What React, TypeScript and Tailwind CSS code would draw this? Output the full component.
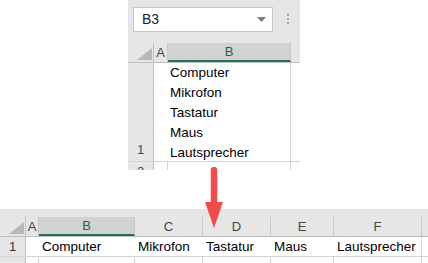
import React from 'react'

const sans = "font-['Liberation_Sans',Arial,sans-serif]"

function Corner({ w }: { w: string }) {
  return (
    <div className={`${w} h-full relative border-r border-[#bfbfbf] shrink-0`}>
      <svg className="absolute right-[1px] bottom-[2px]" width="15" height="12" viewBox="0 0 15 12">
        <polygon points="15,0 15,12 0,12" fill="#b8b8b8" />
      </svg>
    </div>
  )
}

function Head({ w, label, selected }: { w: string; label: string; selected?: boolean }) {
  return (
    <div
      className={`${w} h-full shrink-0 flex items-center justify-center border-r border-[#c9c9c9] text-[13px] ${
        selected ? 'bg-[#d2d2d2] text-[#1d6b3e] border-b-2 border-b-[#217346]' : 'text-[#444]'
      }`}
    >
      {label}
    </div>
  )
}

const words = ['Computer', 'Mikrofon', 'Tastatur', 'Maus', 'Lautsprecher']

function TopSheet() {
  return (
    <div className={`ml-[128px] w-[172px] h-[170px] bg-[#e6e6e6] flex flex-col overflow-hidden ${sans}`}>
      {/* formula bar */}
      <div className="h-[43px] flex items-start pt-[7px] pl-[5px] shrink-0">
        <div className="w-[140px] h-[25px] bg-white border border-[#c6c6c6] flex items-center justify-between pl-[8px] pr-[6px] text-[14px] text-[#222]">
          B3
          <svg width="9" height="5" viewBox="0 0 9 5">
            <polygon points="0,0 9,0 4.5,5" fill="#7a7a7a" />
          </svg>
        </div>
        <div className="ml-[14px] mt-[7px] flex flex-col gap-[2px]">
          <div className="w-[2px] h-[2px] bg-[#a6a6a6]" />
          <div className="w-[2px] h-[2px] bg-[#a6a6a6]" />
          <div className="w-[2px] h-[2px] bg-[#a6a6a6]" />
        </div>
      </div>
      {/* column header */}
      <div className="h-[20px] flex shrink-0 border-b border-[#bfbfbf]">
        <Corner w="w-[26px]" />
        <Head w="w-[14px]" label="A" />
        <Head w="w-[123px]" label="B" selected />
        <div className="flex-1" />
      </div>
      {/* rows */}
      <div className="flex-1 flex flex-col bg-white">
        <div className="h-[99px] flex shrink-0 border-b border-[#d4d4d4]">
          <div className="w-[26px] bg-[#e6e6e6] border-r border-[#bfbfbf] flex items-end justify-center pb-[2px] text-[13px] text-[#1d4f7a] shrink-0">
            1
          </div>
          <div className="w-[14px] shrink-0" />
          <div className="w-[123px] shrink-0 border-r border-[#d4d4d4] flex flex-col pl-[2px] text-[13.5px] text-black">
            {words.map(w => (
              <div key={w} className="h-[20px] leading-[20px]">
                {w}
              </div>
            ))}
          </div>
          <div className="flex-1" />
        </div>
        <div className="flex-1 flex overflow-hidden">
          <div className="w-[26px] bg-[#e6e6e6] border-r border-[#bfbfbf] shrink-0 text-center text-[13px] leading-[20px] text-[#444]">
            2
          </div>
          <div className="w-[14px] shrink-0 border-r border-[#d4d4d4]" />
          <div className="w-[123px] shrink-0 border-r border-[#d4d4d4]" />
        </div>
      </div>
    </div>
  )
}

const cols = [
  { l: 'B', w: 'w-[96px]', t: 'Computer' },
  { l: 'C', w: 'w-[68px]', t: 'Mikrofon' },
  { l: 'D', w: 'w-[68px]', t: 'Tastatur' },
  { l: 'E', w: 'w-[63px]', t: 'Maus' },
  { l: 'F', w: 'w-[88px]', t: 'Lautsprecher' },
]

function BottomSheet() {
  return (
    <div className={`mt-[39px] h-[54px] bg-[#e6e6e6] flex flex-col pt-[8px] overflow-hidden ${sans}`}>
      <div className="h-[20px] flex shrink-0 border-b border-[#bfbfbf]">
        <Corner w="w-[26px]" />
        <Head w="w-[13px]" label="A" />
        {cols.map(c => (
          <Head key={c.l} w={c.w} label={c.l} selected={c.l === 'B'} />
        ))}
        <div className="flex-1" />
      </div>
      <div className="h-[20px] flex shrink-0 bg-white border-b border-[#d4d4d4]">
        <div className="w-[26px] bg-[#e6e6e6] border-r border-[#bfbfbf] flex items-center justify-center text-[13px] text-[#333] shrink-0">
          1
        </div>
        <div className="w-[13px] shrink-0" />
        {cols.map((c, i) => (
          <div
            key={c.l}
            className={`${c.w} shrink-0 pl-[3px] text-[13.5px] leading-[20px] text-black ${
              i === cols.length - 1 ? 'border-r border-[#d4d4d4]' : ''
            }`}
          >
            {c.t}
          </div>
        ))}
        <div className="flex-1" />
      </div>
      <div className="flex-1 flex bg-white">
        <div className="w-[26px] bg-[#e6e6e6] border-r border-[#bfbfbf] shrink-0" />
        <div className="w-[13px] shrink-0 border-r border-[#d4d4d4]" />
        {cols.map(c => (
          <div key={c.l} className={`${c.w} shrink-0 border-r border-[#d4d4d4]`} />
        ))}
      </div>
    </div>
  )
}

export default function App() {
  return (
    <div className="w-[428px] h-[263px] bg-white relative overflow-hidden">
      <TopSheet />
      <BottomSheet />
      {/* red arrow */}
      <svg className="absolute left-[205px] top-[166px]" width="18" height="62" viewBox="0 0 18 62">
        <rect x="5.75" y="1" width="6.5" height="38" rx="3" fill="#f34a4a" />
        <polygon points="0,36 18,36 9,62" fill="#f34a4a" />
      </svg>
    </div>
  )
}
